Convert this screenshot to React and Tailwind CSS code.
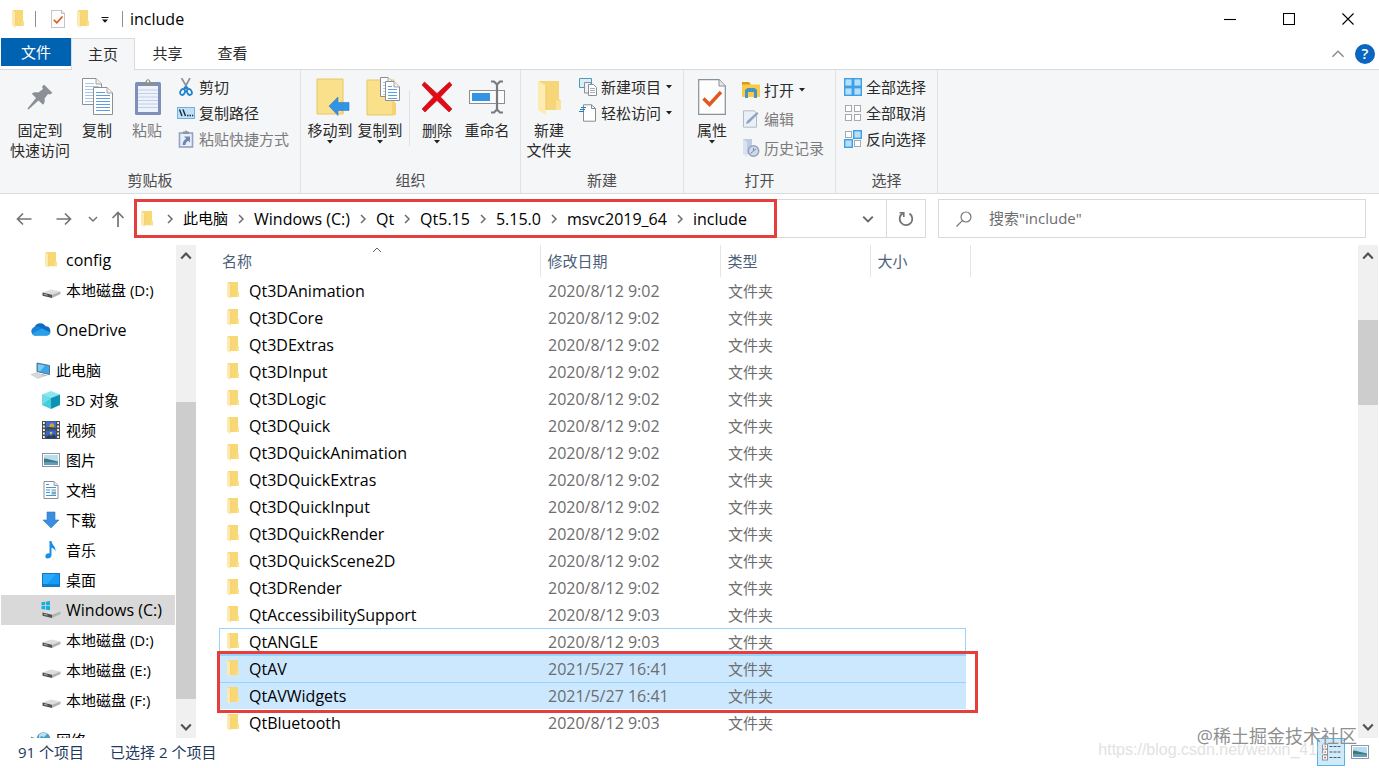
import React from 'react';

const SmallFolder = ({ className = 'h-[18px] w-3' }) => (
  <svg viewBox="0 0 12 18" preserveAspectRatio="none" className={`shrink-0 ${className}`} aria-hidden="true">
    <path d="M1 0H11V10.5L12 11.5V16H1Z" fill="#f8d775" />
    <path d="M9.6 11L12 11.5V16H9.6Z" fill="#fbe08d" />
    <path d="M0 .4L3.6 2.4V18L0 15.6Z" fill="#fdeab0" />
    <path d="M3.6 2.4V16" stroke="#eec762" strokeWidth=".6" />
  </svg>
);

const Chevron = ({ dir = 'right', className = 'size-2.5 text-[#6d6d6d]', w = 1.5 }) => {
  const d = {
    right: 'M3 1L7 5L3 9',
    down: 'M1 3L5 7L9 3',
    up: 'M1 7L5 3L9 7',
  }[dir];
  return (
    <svg viewBox="0 0 10 10" className={`shrink-0 ${className}`} fill="none" stroke="currentColor" strokeWidth={w} aria-hidden="true">
      <path d={d} />
    </svg>
  );
};

const Caret = ({ className = '' }) => (
  <svg viewBox="0 0 6 4" className={`h-1 w-1.5 shrink-0 ${className}`} aria-hidden="true">
    <path d="M0 0H6L3 3.6Z" fill="#222" />
  </svg>
);

const Sheet = ({ x = 0, y = 0, w = 20, h = 27, line = '#8ab4e8' }) => (
  <g transform={`translate(${x} ${y})`}>
    <path d={`M.5 .5H${w - 6}L${w - 0.5} 6V${h - 0.5}H.5Z`} fill="#fff" stroke="#8a8f96" />
    <path d={`M${w - 6} .5V6H${w - 0.5}`} fill="#f3eee2" stroke="#8a8f96" strokeWidth=".8" />
    {[5, 8, 11, 14, 17, 20, 23].filter((v) => v < h - 2).map((v) => (
      <path key={v} d={`M3 ${v + 0.5}H${v < 7 ? w - 8 : w - 3}`} stroke={line} />
    ))}
  </g>
);

const PinIcon = () => (
  <svg viewBox="0 0 26 26" className="size-[26px]" aria-hidden="true">
    <path d="M17 .5L25.5 9L22.5 10.5L21 10L17.5 14.5C18.2 17 17.6 19 16 20.8L11.500 16.500L1.5 25.5L.5 24.5L9 14L4.8 9.8C6.8 8.2 9 8 11.3 8.6L16 5L15 3Z" fill="#8c9096" />
  </svg>
);

const CopyIcon = () => (
  <svg viewBox="0 0 32 38" className="ml-0.5 h-[38px] w-8" aria-hidden="true">
    <Sheet w={20} h={27} line="#a8c6ec" />
    <Sheet x={11} y={9} w={20} h={28} line="#5f9ce4" />
  </svg>
);

const PasteIcon = () => (
  <svg viewBox="0 0 28 38" className="ml-0.5 h-[38px] w-7" aria-hidden="true">
    <rect x="1" y="4" width="26" height="33" rx="1.5" fill="#7f8fba" />
    <rect x="4" y="8" width="20" height="26" fill="#edf2fb" />
    {[12, 15.5, 19, 22.5, 26, 29.5].map((y) => <path key={y} d={`M4 ${y}H24`} stroke="#c3d0ea" />)}
    <path d="M8 8V4.5H11.5C11.5 0 16.5 0 16.5 4.5H20V8Z" fill="#8b9098" />
    <circle cx="14" cy="3.4" r="1.1" fill="#f5f6f7" />
  </svg>
);

const ScissorsIcon = () => (
  <svg viewBox="0 0 14 18" className="h-[18px] w-3.5" fill="none" aria-hidden="true">
    <path d="M2.5 0L9 11M11 0L5 11" stroke="#8d9299" strokeWidth="1.7" />
    <ellipse cx="3.6" cy="14" rx="2.3" ry="3" stroke="#1c82cf" strokeWidth="1.8" transform="rotate(25 3.6 14)" />
    <ellipse cx="10.4" cy="14" rx="2.3" ry="3" stroke="#1c82cf" strokeWidth="1.8" transform="rotate(-25 10.4 14)" />
    <path d="M5 10.5L7 9L9 10.5" stroke="#1c82cf" strokeWidth="1.6" />
  </svg>
);

const PathIcon = () => (
  <svg viewBox="0 0 18 12" className="h-3 w-[18px]" aria-hidden="true">
    <rect x=".5" y=".5" width="17" height="11" fill="#bfe0f7" stroke="#6fb1e0" />
    <path d="M2.5 2.5L5 9M6 2.5L8.5 9" stroke="#1b2b3a" strokeWidth="1.4" />
    <path d="M10 8.5H11.5M12.5 8.5H14M15 8.5H16.3" stroke="#1b2b3a" strokeWidth="1.3" />
  </svg>
);

const PasteLinkIcon = () => (
  <svg viewBox="0 0 16 18" className="h-[18px] w-4" aria-hidden="true">
    <rect x="1.5" y="3" width="13" height="14" fill="#e9eef8" stroke="#93a1c4" strokeWidth="1.6" />
    <path d="M5 4V1.5H7L8 0L9 1.5H11V4Z" fill="#8b93a5" />
    <path d="M6 6.5H12V12.5L10.3 10.8C8.5 11.8 7.7 13 7.4 15H4.6C4.8 12 6 10 8.1 8.6Z" fill="#6f86b5" />
  </svg>
);

const MoveToIcon = () => (
  <svg viewBox="-6 0 40 38" className="h-[38px] w-10" aria-hidden="true">
    <path d="M1 1H27V36H1Z" fill="#fbe08c" stroke="#e8c767" />
    <path d="M25 22L28 23V36H25Z" fill="#f6d271" />
    <path d="M13 28L22 19V24.5H33V32.5H22V37.5Z" fill="#3393e4" stroke="#2b7fcb" strokeWidth=".6" />
  </svg>
);

const CopyToIcon = () => (
  <svg viewBox="-6 0 40 40" className="h-10 w-10" aria-hidden="true">
    <path d="M1 3H28V38H1Z" fill="#fbe08c" stroke="#e8c767" />
    <path d="M26 25L30 26V38H26Z" fill="#f6d271" />
    <Sheet x={14} y={0} w={14} h={20} line="#a8c6ec" />
    <Sheet x={19} y={4} w={15} h={20} line="#5f9ce4" />
  </svg>
);

const DeleteIcon = () => (
  <svg viewBox="0 0 32 32" className="size-8" aria-hidden="true">
    <path d="M3.5 1L16 12.5L28.5 1L31 4L19.5 16L31 28L28 31L16 19.5L4 31L1 28L12.5 16L1 4Z" fill="#e00b17" stroke="#b80812" strokeWidth=".6" />
  </svg>
);

const RenameIcon = () => (
  <svg viewBox="0 0 36 34" className="h-[34px] w-9" fill="none" aria-hidden="true">
    <rect x=".5" y="10.5" width="35" height="13" fill="#fbfbfc" stroke="#8b8f94" />
    <rect x="3" y="13" width="18" height="8" fill="#3393e4" />
    <path d="M22 1.5H25L28 4.5L31 1.5H34M28 4V30M22 32.5H25L28 29.5L31 32.5H34" stroke="#777b80" strokeWidth="2.2" />
  </svg>
);

const NewFolderIcon = () => (
  <svg viewBox="0 0 24 35" className="h-[35px] w-6" aria-hidden="true">
    <path d="M2 1H22V19L24 21V30H2Z" fill="#f6d678" />
    <path d="M19 20L24 21V30H19Z" fill="#fbe296" />
    <path d="M1 1L9 5.5V35L1 30Z" fill="#fdebb2" />
    <path d="M9 5.5V30" stroke="#ecc865" />
  </svg>
);

const NewItemIcon = () => (
  <svg viewBox="0 0 18 18" className="size-[18px]" aria-hidden="true">
    <path d="M.5 .5H12.5V9.5H.5Z" fill="#d9eef6" stroke="#4f9ab4" />
    <path d="M5.5 4.5H12V15H5.5Z" fill="#eef2f6" stroke="#8a9098" />
    <path d="M9.5 6.5H14.5L17.5 9.5V17.5H9.5Z" fill="#fff" stroke="#8a9098" />
    <path d="M11 10.5H16M11 12.5H16M11 14.5H16" stroke="#a9aeb6" />
  </svg>
);

const EasyAccessIcon = () => (
  <svg viewBox="0 0 18 18" className="size-[18px]" aria-hidden="true">
    <path d="M4.5 .8H12.5L16.5 4.5V17.2H4.5Z" fill="#fff" stroke="#878c92" />
    <path d="M12.5 .8V4.5H16.5" fill="none" stroke="#878c92" />
    <path d="M2 3.5H7M1 5.5H6M0 7.5H5" stroke="#1c82b8" strokeWidth="1.2" />
  </svg>
);

const PropertiesIcon = ({ className = 'h-9 w-7' }) => (
  <svg viewBox="0 0 28 36" className={className} aria-hidden="true">
    <path d="M.7 .7H21L27.3 7V35.3H.7Z" fill="#fdfdfd" stroke="#8b9096" strokeWidth="1.2" />
    <path d="M21 .7V7H27.3" fill="#e6e8ea" stroke="#8b9096" />
    <path d="M5.5 19.5L11.5 25.5L23 13" fill="none" stroke="#e1571f" strokeWidth="3.4" />
  </svg>
);

const OpenIcon = () => (
  <svg viewBox="0 0 18 16" className="h-4 w-[18px]" aria-hidden="true">
    <path d="M0 0H7L9 2.5H18V15H0Z" fill="#fbcb45" />
    <path d="M0 0H7L8.5 2.5H0Z" fill="#d99a1b" />
    <path d="M3 16V8L5.500 6H12.5L15 8V16H12V10H6V16Z" fill="#4794c8" />
  </svg>
);

const EditIcon = () => (
  <svg viewBox="0 0 18 18" className="size-[18px]" aria-hidden="true">
    <path d="M1.5 .8H12L14.5 3V17.2H1.5Z" fill="#eaf0f8" stroke="#b1bccb" />
    <path d="M4 14L5 11L15 2L16.5 3.5L7 13Z" fill="#8fa3c0" />
  </svg>
);

const HistoryIcon = () => (
  <svg viewBox="0 0 18 18" className="size-[18px]" aria-hidden="true">
    <path d="M1 0H10V15H1Z" fill="#bccbe2" />
    <path d="M1 0L5 3V18L1 14.5Z" fill="#d8e2f0" />
    <circle cx="11.5" cy="12" r="5.2" fill="#cfd9e8" stroke="#93a3bd" strokeWidth="1.5" />
    <path d="M11.5 9V12L8.5 14.5M11.5 12L14 10" fill="none" stroke="#7a8ba8" />
  </svg>
);

const GridIcon = ({ on }) => (
  <svg viewBox="0 0 18 18" className="size-[18px]" aria-hidden="true">
    {[[0, 0], [9, 0], [0, 9], [9, 9]].map(([x, y], i) =>
      on[i] ? (
        <rect key={i} x={x + 0.7} y={y + 0.7} width="7.6" height="7.6" fill="#b5e0fb" stroke="#3f9fe6" strokeWidth="1.4" />
      ) : (
        <rect key={i} x={x + 1.5} y={y + 1.5} width="6" height="6" fill="#fff" stroke="#a6a9ad" />
      ),
    )}
  </svg>
);

const DriveIcon = ({ windows }) => (
  <svg viewBox="0 0 20 18" className="h-[18px] w-5 shrink-0" aria-hidden="true">
    <path d="M1.5 11.5L10 8.5L19.5 10.5L11 13.8Z" fill="#dcdddd" />
    <path d="M1.5 11.5L11 13.8V17L1.5 14.8Z" fill="#4f5254" />
    <path d="M11 13.8L19.5 10.5V13L11 17Z" fill="#b0b2b4" />
    <path d="M3 13.3L6.5 14.2" stroke="#9fb7a5" />
    {windows && <path d="M.5 1.3L4 .8V4.3H.5ZM4.8 .7L9 0V4.3H4.8ZM.5 5.1H4V8.6L.5 8.1ZM4.8 5.1H9V9.3L4.8 8.7Z" fill="#19aee0" />}
  </svg>
);

const CloudIcon = () => (
  <svg viewBox="0 0 20 14" className="mb-0.5 h-3.5 w-5 shrink-0" aria-hidden="true">
    <path d="M4.5 13.5A4.2 4.2 0 0 1 3.5 5.3A6 6 0 0 1 14.5 4.3A4.7 4.7 0 0 1 16 13.5Z" fill="#0f6cc4" />
    <path d="M5 4.5C8 4 10 6 12.5 7.5L5 13.5A4.2 4.2 0 0 1 1 7.5C2 5.5 3.5 4.7 5 4.5Z" fill="#1583d8" />
    <path d="M4.5 13.5C2.5 13.5 1.5 12.5 1.2 11.5L11 6.5L19.5 10.5C19 12.5 17.8 13.5 16 13.5Z" fill="#27a0ea" />
  </svg>
);

const PcIcon = () => (
  <svg viewBox="0 0 20 17" className="h-[17px] w-5 shrink-0" aria-hidden="true">
    <path d="M6 1L18.5 3.5V12.5L6 9.5Z" fill="#3ca6e8" stroke="#56697a" strokeWidth=".9" />
    <path d="M7 2.2L14 3.6L9 9.3L7 8.8Z" fill="#7cccf6" />
    <path d="M11 12L17 13.3L13 14.5L9 13Z" fill="#b9bec2" />
    <path d="M0 12.5L6 10.5L13 14L7 16.5Z" fill="#d7dadc" stroke="#aeb2b5" strokeWidth=".4" />
  </svg>
);

const CubeIcon = () => (
  <svg viewBox="0 0 18 18" className="size-[18px] shrink-0" aria-hidden="true">
    <path d="M0 3.5L9 0L18 3.5L9 7Z" fill="#8be6ee" />
    <path d="M0 3.5L9 7V18L0 14Z" fill="#46cbdc" />
    <path d="M9 7L18 3.5V14L9 18Z" fill="#0c93b4" />
    <path d="M0 3.5L9 7L0 14Z" fill="#6fdbe6" />
  </svg>
);

const VideoIcon = () => (
  <svg viewBox="0 0 18 18" className="size-[18px] shrink-0" aria-hidden="true">
    <rect width="18" height="18" fill="#4a4c50" />
    <rect x="4" y=".5" width="10" height="8" fill="#3c6fd0" />
    <rect x="4" y="9.5" width="10" height="8" fill="#3566cc" />
    <path d="M7 6L8 3L11 2L12.5 5L11 7Z" fill="#d9a032" />
    <path d="M4 8.5V6.5L8 6L14 7V8.5Z" fill="#314a52" />
    <path d="M4 17.5V16L7 14L9 15.5L12 13L14 16V17.5Z" fill="#2d3b52" />
    <circle cx="9" cy="12" r="1.3" fill="#e5b93f" />
    {[1, 4.5, 8, 11.5, 15].map((y) => (
      <g key={y} fill="#f3f3f3"><rect x="1" y={y} width="1.8" height="2" /><rect x="15.2" y={y} width="1.8" height="2" /></g>
    ))}
  </svg>
);

const PictureIcon = () => (
  <svg viewBox="0 0 18 14" className="h-3.5 w-[18px] shrink-0" aria-hidden="true">
    <rect x=".5" y=".5" width="17" height="13" fill="#fff" stroke="#93979b" />
    <rect x="2" y="2" width="14" height="10" fill="#b5def6" />
    <path d="M2 5.5C6 5.5 10 7.5 16 8.5V10H2Z" fill="#47796a" />
    <path d="M2 9.5C7 8.5 11 9.5 16 9.5V12H2Z" fill="#5d9fc9" />
  </svg>
);

const DocIcon = () => (
  <svg viewBox="0 0 16 18" className="h-[18px] w-4 shrink-0" aria-hidden="true">
    <path d="M1 .5H11L15 4.5V17.5H1Z" fill="#fff" stroke="#8a8f95" />
    <path d="M11 .5V4.5H15" fill="#e3e6e9" stroke="#8a8f95" strokeWidth=".8" />
    <path d="M3 3.5H6M3 6.5H13M3 9H7M8.5 9H13M3 11.5H7M3 14.5H13" stroke="#4198d8" strokeWidth="1.2" />
    <rect x="8.5" y="10.5" width="4.5" height="3" fill="#8aa7b8" />
  </svg>
);

const DownloadIcon = () => (
  <svg viewBox="0 0 18 18" className="size-[18px] shrink-0" aria-hidden="true">
    <path d="M5 1H13V9H17L9 17L1 9H5Z" fill="#3a8fe0" stroke="#2c78c6" strokeWidth=".6" />
  </svg>
);

const MusicIcon = () => (
  <svg viewBox="0 0 18 18" className="size-[18px] shrink-0" aria-hidden="true">
    <path d="M7.5 0H9.5C9.8 4 14 5 13.5 10.5C12.8 8.5 11.5 7.2 9.5 6.8V14C9.5 16.5 7.5 17.5 5.5 17.5S3 16 3.5 14.5C4 12.8 6 12 7.5 12.5Z" fill="#1b8fe6" />
  </svg>
);

const DesktopIcon = () => (
  <svg viewBox="0 0 18 14" className="h-3.5 w-[18px] shrink-0" aria-hidden="true">
    <rect x=".5" y=".5" width="17" height="13" fill="#149bf5" stroke="#1874bd" />
    <path d="M1 1H14L5 11H1Z" fill="#2ba9fb" />
    <path d="M1 12H17" stroke="#0d5fa5" />
  </svg>
);

const NetworkIcon = () => (
  <svg viewBox="0 0 20 18" className="h-[18px] w-5 shrink-0" aria-hidden="true">
    <circle cx="12.5" cy="8" r="6.8" fill="#4b9cc9" />
    <path d="M8 4C10 1.5 14 1.2 16 3L13 6L10 5L8 9Z" fill="#bfe0ee" />
    <path d="M0 6L8 9V15L0 12Z" fill="#6cbfe8" stroke="#60717e" strokeWidth=".7" />
  </svg>
);

const NavArrow = ({ d }) => (
  <svg viewBox="0 0 16 16" className="size-4" fill="none" stroke="#747474" strokeWidth="1.7" aria-hidden="true">
    <path d={d} />
  </svg>
);

const BigButton = ({ icon, lines, caret, muted, className = 'w-[50px]' }) => (
  <button type="button" className={`flex shrink-0 flex-col items-center whitespace-nowrap pt-1.5 leading-5 ${muted ? 'text-[#7b7b7b]' : 'text-[#2b2b2b]'} ${className}`}>
    <span className="flex h-11 items-center justify-center pb-0.5">{icon}</span>
    {lines.map((l) => <span key={l}>{l}</span>)}
    {caret && <Caret />}
  </button>
);

const SmallButton = ({ icon, label, caret, muted, className = 'h-[26px]' }) => (
  <button type="button" className={`flex items-center whitespace-nowrap leading-5 ${muted ? 'text-[#7b7b7b]' : 'text-[#2b2b2b]'} ${className}`}>
    <span className="mr-1 flex w-[18px] shrink-0 justify-center">{icon}</span>
    {label}
    {caret && <Caret className="ml-[5px]" />}
  </button>
);

const Group = ({ label, children, className = '' }) => (
  <section aria-label={label} className={`flex shrink-0 flex-col justify-between border-r border-[#e1e2e4] pb-[3px] ${className}`}>
    <div className="flex items-start">{children}</div>
    <div className="text-center leading-5 text-[#4d4d4d]">{label}</div>
  </section>
);

/* Latin-only labels are set one pixel larger so that they sit evenly beside the Chinese ones. */
const labelSize = (text) => (/^[\x20-\x7e]+$/.test(text) ? 'text-[16px]' : 'text-[15px]');

const crumbs = ['此电脑', 'Windows (C:)', 'Qt', 'Qt5.15', '5.15.0', 'msvc2019_64', 'include'];

const places = [
  { label: '3D 对象', icon: <CubeIcon /> },
  { label: '视频', icon: <VideoIcon /> },
  { label: '图片', icon: <PictureIcon /> },
  { label: '文档', icon: <DocIcon /> },
  { label: '下载', icon: <DownloadIcon /> },
  { label: '音乐', icon: <MusicIcon /> },
  { label: '桌面', icon: <DesktopIcon /> },
  { label: 'Windows (C:)', icon: <DriveIcon windows />, active: true },
  { label: '本地磁盘 (D:)', icon: <DriveIcon /> },
  { label: '本地磁盘 (E:)', icon: <DriveIcon /> },
  { label: '本地磁盘 (F:)', icon: <DriveIcon /> },
];

const files = [
  ['Qt3DAnimation', '2020/8/12 9:02'],
  ['Qt3DCore', '2020/8/12 9:02'],
  ['Qt3DExtras', '2020/8/12 9:02'],
  ['Qt3DInput', '2020/8/12 9:02'],
  ['Qt3DLogic', '2020/8/12 9:02'],
  ['Qt3DQuick', '2020/8/12 9:02'],
  ['Qt3DQuickAnimation', '2020/8/12 9:02'],
  ['Qt3DQuickExtras', '2020/8/12 9:02'],
  ['Qt3DQuickInput', '2020/8/12 9:02'],
  ['Qt3DQuickRender', '2020/8/12 9:02'],
  ['Qt3DQuickScene2D', '2020/8/12 9:02'],
  ['Qt3DRender', '2020/8/12 9:02'],
  ['QtAccessibilitySupport', '2020/8/12 9:03'],
  ['QtANGLE', '2020/8/12 9:03', 'focus'],
  ['QtAV', '2021/5/27 16:41', 'selected'],
  ['QtAVWidgets', '2021/5/27 16:41', 'selected'],
  ['QtBluetooth', '2020/8/12 9:03'],
];

const rowStyle = {
  focus: 'shadow-[inset_0_0_0_1px_#99d1ff]',
  selected: 'bg-[#cce8ff] shadow-[inset_0_1px_0_0_#99d1ff]',
};

const SideItem = ({ icon, label, active, root }) => (
  <li>
    <a href="#" aria-current={active ? 'location' : undefined} className={`flex h-[30px] items-center whitespace-nowrap text-black ${root ? 'pl-[29px]' : 'pl-[39px]'} ${labelSize(label)} ${active ? 'bg-[#d9d9d9]' : ''}`}>
      <span className="mr-1 flex w-[22px] shrink-0 justify-center">{icon}</span>
      {label}
    </a>
  </li>
);

const Scrollbar = ({ before, thumb, after, label }) => (
  <div role="group" aria-label={label} className="flex w-5 shrink-0 flex-col bg-[#f0f0f0]">
    <button type="button" aria-label="向上滚动" className="flex h-[22px] shrink-0 items-center justify-center">
      <Chevron dir="up" w={1.8} className="size-3 text-[#505050]" />
    </button>
    <div className={before} />
    <div className={`bg-[#cdcdcd] ${thumb}`} />
    <div className={after} />
    <button type="button" aria-label="向下滚动" className="flex h-[22px] shrink-0 items-center justify-center">
      <Chevron dir="down" w={1.8} className="size-3 text-[#505050]" />
    </button>
  </div>
);

export default function App() {
  return (
    <div className="relative flex h-screen flex-col overflow-hidden bg-white font-['Open_Sans','Noto_Sans_CJK_SC',sans-serif] text-[15px] text-black">
      <header className="flex h-[38px] shrink-0 items-center pl-3">
        <SmallFolder />
        <span className="ml-[11px] h-4 w-px bg-[#8f8f8f]" />
        <button type="button" aria-label="属性" className="ml-[15px]"><PropertiesIcon className="h-[18px] w-3.5" /></button>
        <button type="button" aria-label="新建文件夹" className="ml-3"><SmallFolder /></button>
        <button type="button" aria-label="自定义快速访问工具栏" className="ml-3 mt-0.5">
          <svg viewBox="0 0 8 6" className="h-1.5 w-2"><path d="M.5 .5H7.5" stroke="#111" /><path d="M1 2.5H7L4 5.8Z" fill="#111" /></svg>
        </button>
        <span className="ml-[13px] h-4 w-px bg-[#8f8f8f]" />
        <h1 className="ml-[7px] text-[16px]">include</h1>
        <div className="ml-auto flex h-full pr-0.5">
          {[['最小化', 'M0 6.5H12'], ['最大化', 'M.5 .5H11.5V11.5H.5Z'], ['关闭', 'M.5 .5L11.5 11.5M11.5 .5L.5 11.5']].map(([name, d]) => (
            <button key={name} type="button" aria-label={name} className="flex w-[59px] items-center justify-center">
              <svg viewBox="0 0 12 12" className="size-3" fill="none" stroke="#000" strokeWidth="1.1"><path d={d} /></svg>
            </button>
          ))}
        </div>
      </header>

      <nav aria-label="功能区选项卡" className="flex h-8 shrink-0 items-stretch border-b border-[#dadbdc] pl-px text-[#2b2b2b]">
        <button type="button" className="mb-[3px] w-[70px] bg-[#0063b1] text-white">文件</button>
        <button type="button" className="-mb-px w-16 border border-b-0 border-[#dadbdc] bg-[#f5f6f7]">主页</button>
        <button type="button" className="w-[65px]">共享</button>
        <button type="button" className="w-[65px]">查看</button>
        <div className="ml-auto flex items-center gap-2.5 pr-1">
          <button type="button" aria-label="折叠功能区"><Chevron dir="up" w={1} className="size-3.5 text-[#8a8a8a]" /></button>
          <button type="button" aria-label="帮助" className="flex size-5 items-center justify-center rounded-full bg-[#0a66bf] text-[15px] font-semibold leading-none text-white">?</button>
        </div>
      </nav>

      <div className="flex h-[124px] shrink-0 border-b border-[#dadbdc] bg-[#f5f6f7]">
        <Group label="剪贴板" className="w-[301px]">
          <BigButton className="ml-2.5 w-[60px]" icon={<PinIcon />} lines={['固定到', '快速访问']} />
          <BigButton className="ml-0.5 w-[50px]" icon={<CopyIcon />} lines={['复制']} />
          <BigButton muted icon={<PasteIcon />} lines={['粘贴']} />
          <div className="flex flex-col pl-[5px] pt-1">
            <SmallButton icon={<ScissorsIcon />} label="剪切" />
            <SmallButton icon={<PathIcon />} label="复制路径" />
            <SmallButton muted icon={<PasteLinkIcon />} label="粘贴快捷方式" />
          </div>
        </Group>
        <Group label="组织" className="w-[220px]">
          <BigButton className="ml-1 w-[50px]" caret icon={<MoveToIcon />} lines={['移动到']} />
          <BigButton caret icon={<CopyToIcon />} lines={['复制到']} />
          <span className="ml-1 mr-0.5 mt-5 h-14 w-px bg-[#e1e2e4]" />
          <BigButton caret icon={<DeleteIcon />} lines={['删除']} />
          <BigButton icon={<RenameIcon />} lines={['重命名']} />
        </Group>
        <Group label="新建" className="w-[163px]">
          <BigButton className="ml-[3px] w-[50px]" icon={<NewFolderIcon />} lines={['新建', '文件夹']} />
          <div className="flex flex-col pl-[5px] pt-1">
            <SmallButton caret icon={<NewItemIcon />} label="新建项目" />
            <SmallButton caret icon={<EasyAccessIcon />} label="轻松访问" />
          </div>
        </Group>
        <Group label="打开" className="w-[152px]">
          <BigButton className="ml-[3px] w-[50px]" caret icon={<PropertiesIcon />} lines={['属性']} />
          <div className="flex flex-col pl-[5px] pt-[5px]">
            <SmallButton className="h-[29px]" caret icon={<OpenIcon />} label="打开" />
            <SmallButton className="h-[29px]" muted icon={<EditIcon />} label="编辑" />
            <SmallButton className="h-[29px]" muted icon={<HistoryIcon />} label="历史记录" />
          </div>
        </Group>
        <Group label="选择" className="w-[102px]">
          <div className="flex flex-col pl-2 pt-1">
            <SmallButton icon={<GridIcon on={[1, 1, 1, 1]} />} label="全部选择" />
            <SmallButton icon={<GridIcon on={[0, 0, 0, 0]} />} label="全部取消" />
            <SmallButton icon={<GridIcon on={[0, 1, 1, 0]} />} label="反向选择" />
          </div>
        </Group>
      </div>

      <div className="flex h-[51px] shrink-0 items-center pb-0.5 pr-[13px]">
        <div className="flex w-[134px] shrink-0 items-center pl-4">
          <button type="button" aria-label="后退"><NavArrow d="M15.5 8H1.5M7 2.5L1.5 8L7 13.5" /></button>
          <button type="button" aria-label="前进" className="ml-6"><NavArrow d="M.5 8H14.5M9 2.5L14.5 8L9 13.5" /></button>
          <button type="button" aria-label="最近浏览的位置" className="ml-4"><Chevron dir="down" className="size-2.5 text-[#747474]" /></button>
          <button type="button" aria-label="上移" className="ml-3"><NavArrow d="M8 16V1.5M2.5 7L8 1.5L13.5 7" /></button>
        </div>
        <div className="relative flex h-[39px] min-w-0 flex-1 items-stretch border border-[#d9d9d9]">
          <div className="flex min-w-0 items-center pl-1.5">
            <SmallFolder className="h-4 w-3" />
            {crumbs.map((c, i) => (
              <React.Fragment key={c}>
                <span className={`flex shrink-0 justify-center ${i === 0 ? 'w-[30px] pl-1' : 'w-[26px]'}`}><Chevron /></span>
                <a href="#" className={`whitespace-nowrap ${labelSize(c)}`}>{c}</a>
              </React.Fragment>
            ))}
          </div>
          <button type="button" aria-label="历史地址" className="ml-auto flex w-9 items-center justify-center"><Chevron dir="down" w={1.7} className="size-3 text-[#6a6a6a]" /></button>
          <button type="button" aria-label="刷新" className="flex w-[39px] items-center justify-center border-l border-[#d9d9d9]">
            <svg viewBox="0 0 16 16" className="size-4" fill="none" stroke="#747474" strokeWidth="1.8">
              <path d="M11.5 2.6A6.3 6.3 0 1 1 4.8 2.4" />
              <path d="M1.5 1.7H5.8V6" strokeWidth="1.6" />
            </svg>
          </button>
          <div className="pointer-events-none absolute -bottom-px -left-px -top-px w-[643px] border-3 border-[#e53e3b]" />
        </div>
        <div className="ml-3 flex h-[39px] w-[428px] shrink-0 items-center border border-[#d9d9d9] pl-[17px]">
          <svg viewBox="0 0 16 16" className="size-4 shrink-0" fill="none" stroke="#787878" strokeWidth="1.2" aria-hidden="true">
            <circle cx="10" cy="6" r="5" /><path d="M6.3 9.7L.5 15.5" />
          </svg>
          <input type="search" aria-label="搜索" placeholder={'搜索"include"'} className="ml-[17px] min-w-0 flex-1 bg-transparent outline-none placeholder:text-[#6d6d6d]" />
        </div>
      </div>

      <div className="flex min-h-0 flex-1">
        <aside className="w-44 shrink-0 overflow-hidden pl-px pr-px">
          <ul>
            <SideItem icon={<SmallFolder className="h-4 w-3" />} label="config" />
            <SideItem icon={<DriveIcon />} label="本地磁盘 (D:)" />
          </ul>
          <ul className="mt-2.5"><SideItem root icon={<CloudIcon />} label="OneDrive" /></ul>
          <ul className="mt-2.5">
            <SideItem root icon={<PcIcon />} label="此电脑" />
            {places.map((p) => <SideItem key={p.label} {...p} />)}
          </ul>
          <ul className="mt-2.5"><SideItem root icon={<NetworkIcon />} label="网络" /></ul>
        </aside>
        <Scrollbar label="导航窗格滚动条" before="h-[135px] shrink-0" thumb="h-[297px]" after="flex-1" />

        <main className="relative min-w-0 flex-1 overflow-hidden pl-[23px]">
          <table className="w-[751px] table-fixed border-collapse text-left">
            <colgroup>
              <col className="w-[321px]" />
              <col className="w-[180px]" />
              <col className="w-[150px]" />
              <col className="w-[100px]" />
            </colgroup>
            <thead>
              <tr className="h-8 text-[#4c607a]">
                {['名称', '修改日期', '类型', '大小'].map((h, i) => (
                  <th key={h} scope="col" aria-sort={i === 0 ? 'ascending' : undefined} className={`relative border-r border-[#e5e5e5] p-0 font-normal ${i === 0 ? 'pl-[3px]' : 'pl-[7px]'}`}>
                    <button type="button">{h}</button>
                    {i === 0 && <Chevron dir="up" w={1} className="absolute left-[153px] top-0 size-2.5 text-[#5f5f5f]" />}
                  </th>
                ))}
              </tr>
            </thead>
          </table>
          <table className="w-[747px] table-fixed border-separate border-spacing-0 text-left" aria-label="文件">
            <colgroup>
              <col className="w-[322px]" />
              <col className="w-[180px]" />
              <col className="w-[150px]" />
              <col className="w-[95px]" />
            </colgroup>
            <tbody>
              {files.map(([name, date, state]) => (
                <tr key={name} aria-selected={state === 'selected'} className={`h-[27px] text-[16px] leading-6 text-[#6d6d6d] ${state ? rowStyle[state] : ''}`}>
                  <td className="p-0 pl-2 text-black">
                    <span className="flex items-center gap-2.5"><SmallFolder className="h-[17px] w-3" />{name}</span>
                  </td>
                  <td className="p-0 pl-[7px]">{date}</td>
                  <td className="p-0 pl-[7px] text-[15px]">文件夹</td>
                  <td className="p-0" />
                </tr>
              ))}
            </tbody>
          </table>
          <div className="pointer-events-none absolute left-[21px] top-[406px] h-[62px] w-[761px] border-3 border-[#e53e3b]" />
        </main>
        <Scrollbar label="文件列表滚动条" before="h-[53px] shrink-0" thumb="h-[85px] shrink-0" after="flex-1" />
        <div className="w-px shrink-0" />
      </div>

      <footer className="flex h-[30px] shrink-0 items-center pb-0.5 pl-[18px] pr-2.5 text-[#1e395b]">
        <span>91 个项目</span>
        <span className="ml-[26px]">已选择 2 个项目</span>
        <div className="ml-auto flex items-center gap-1.5">
          <button type="button" aria-label="详细信息" className="flex size-7 items-center justify-center border border-[#5bb3e4] bg-[#cfeafb]">
            <svg viewBox="0 0 20 18" className="h-[18px] w-5" fill="none">
              {[1, 6.5, 12].map((y) => (
                <g key={y}><rect x="1.5" y={y} width="5" height="5" fill="#fff" stroke="#8d9297" /><rect x="3.3" y={y + 1.8} width="1.5" height="1.5" fill="#9b4a55" /><path d={`M8.5 ${y + 2.5}H19.5`} stroke="#555b62" strokeDasharray="3 1" /></g>
              ))}
            </svg>
          </button>
          <button type="button" aria-label="大缩略图"><PictureIcon /></button>
        </div>
      </footer>

      <div className="pointer-events-none absolute bottom-2 right-[53px] whitespace-nowrap font-['Liberation_Sans',sans-serif] text-base leading-5 text-[#e2e2e2]">https://blog.csdn.net/weixin_410</div>
      <div className="pointer-events-none absolute bottom-5 right-[22px] whitespace-nowrap text-lg leading-6 text-[#8f8f8f]">@稀土掘金技术社区</div>
    </div>
  );
}
